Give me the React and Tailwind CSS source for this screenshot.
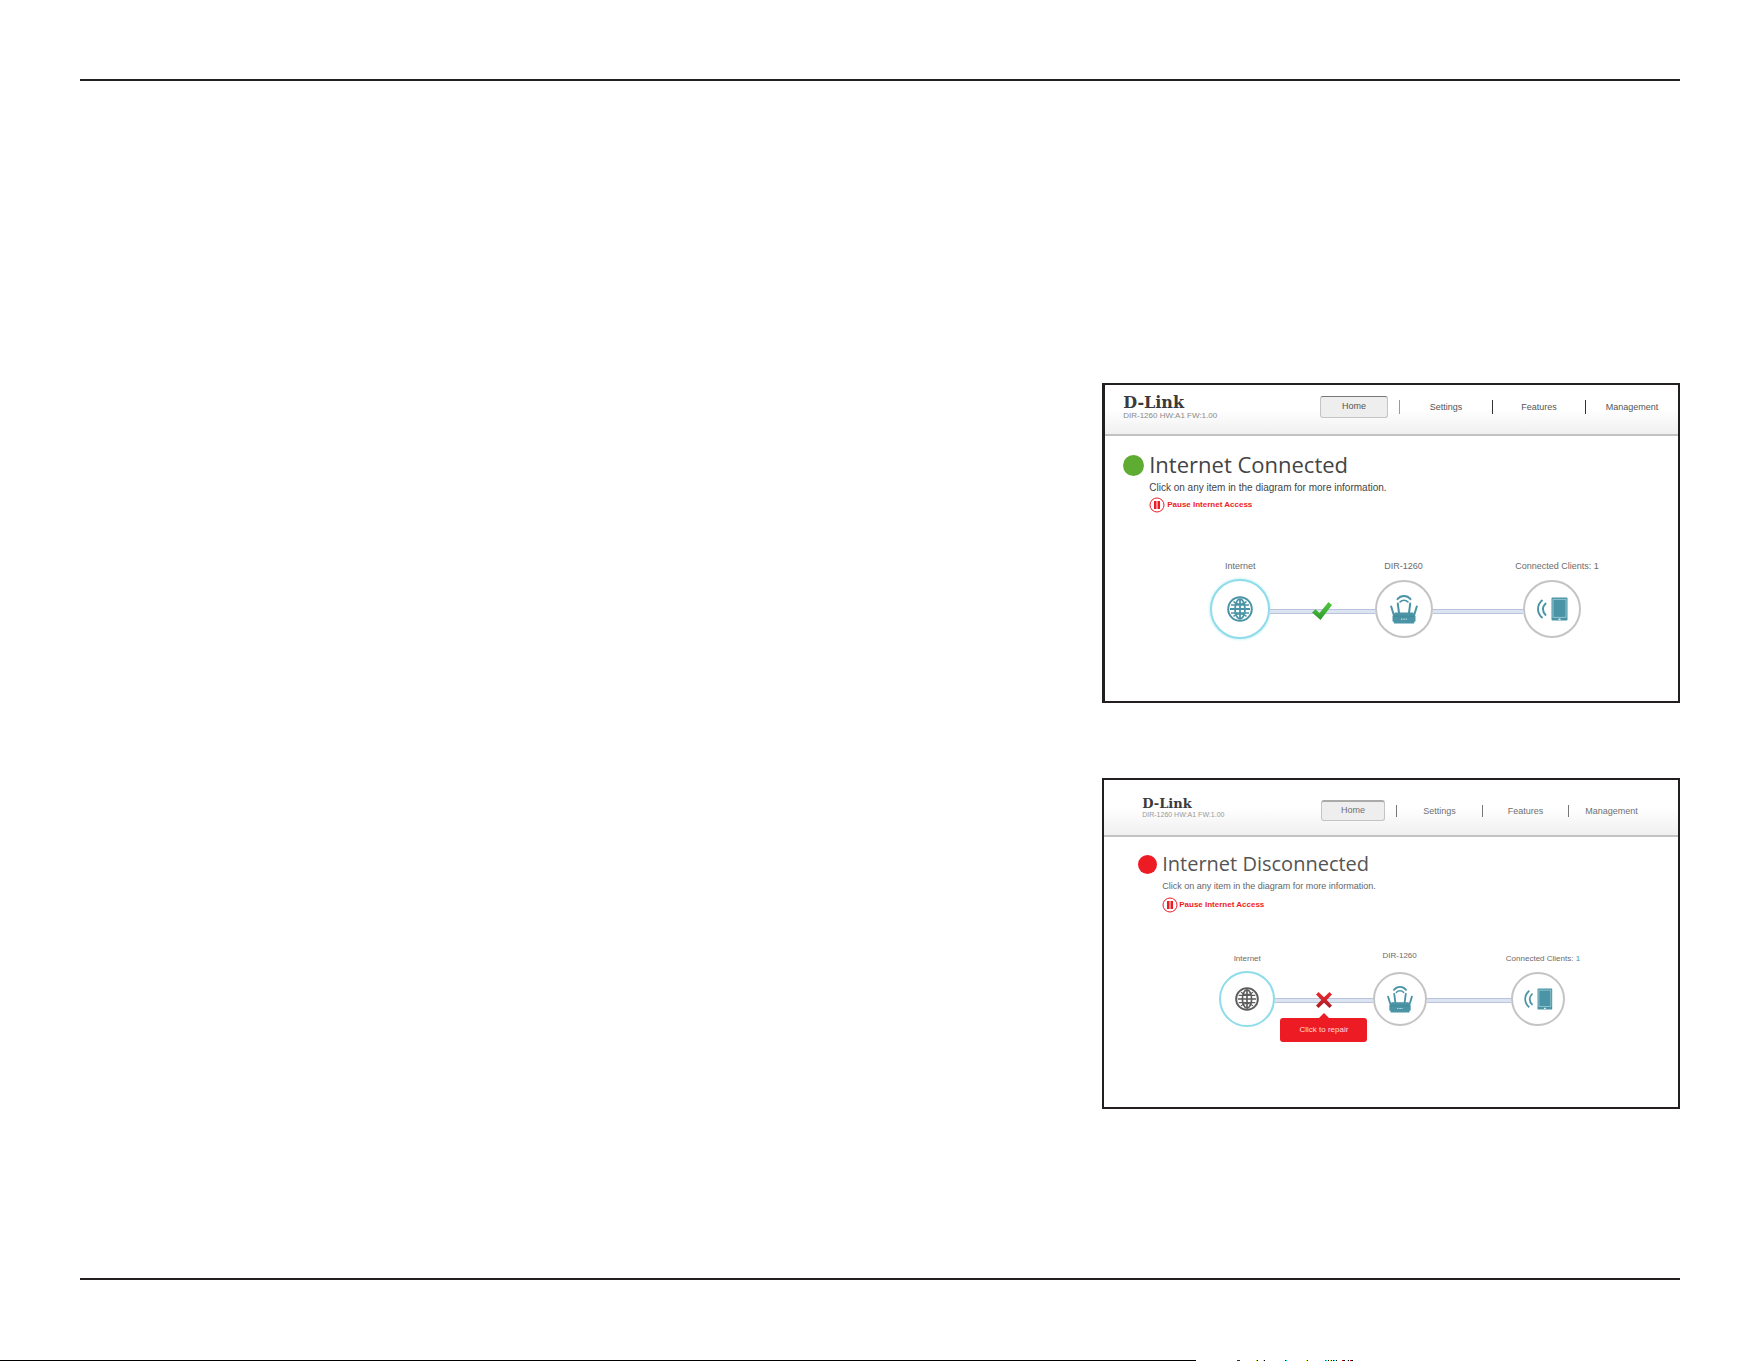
const noiseMarks = [
  [41, 3, "#234"],
  [60, 1, "#cc0"],
  [61, 1, "#000"],
  [67, 1, "#ee0"],
  [68, 1, "#000"],
  [89, 1, "#024"],
  [90, 1, "#0ee"],
  [110, 1, "#ee0"],
  [111, 1, "#00c"],
  [129, 1, "#e02"],
  [130, 1, "#0ee"],
  [132, 1, "#000"],
  [134, 1, "#ee0"],
  [135, 1, "#00c"],
  [137, 1, "#000"],
  [138, 1, "#0ee"],
  [140, 1, "#000"],
  [146, 1, "#e02"],
  [147, 2, "#000"],
  [151, 1, "#ee0"],
  [152, 1, "#000"],
  [154, 1, "#e02"],
  [155, 2, "#000"],
];

function GlobeIcon({ className, color }) {
  return (
    <svg viewBox="0 0 26 26" className={className} fill="none" stroke={color} strokeWidth="1.8">
      <circle cx="13" cy="13" r="11.8" strokeWidth="2" />
      <ellipse cx="13" cy="13" rx="5" ry="9.800" />
      <path d="M13 3v20M3 13h20" />
      <path d="M6.500 5.500C9.500 9 16.500 9 19.500 5.500M6.500 20.500C9.500 17 16.500 17 19.500 20.500M4 9h18M4 17h18" strokeWidth="1.300" />
    </svg>
  );
}

function RouterIcon({ className }) {
  return (
    <svg viewBox="0 0 28 30" className={className} fill="none" stroke="#4a94a6" strokeLinecap="round">
      <path d="M7.500 5.200C11 1 17 1 20.500 5.200" strokeWidth="1.900" />
      <path d="M10 8C12 5.600 16 5.600 18 8" strokeWidth="1.600" />
      <path d="M7.800 9.500L9 19M20.200 9.500L19 19M1.200 12.500L3.800 21M26.800 12.500L24.200 21" strokeWidth="2" />
      <path d="M5 18.500h18l2.500 3.500v5.500H24.500l-.5 2h-20l-.5-2H2.500V22z" fill="#4a94a6" stroke="none" />
      <path d="M4 22.300h20" stroke="#3b8294" strokeWidth=".6" />
      <path d="M11 25.200h6" stroke="#d5edf2" strokeWidth="1" strokeDasharray="1 .6" strokeLinecap="butt" />
    </svg>
  );
}

function TabletIcon({ className }) {
  return (
    <svg viewBox="0 0 32 24" className={className} fill="none" stroke="#4a94a6">
      <path d="M6.500 3C.5 8 .5 16 6.500 21" strokeWidth="1.900" />
      <path d="M10 6C6 10 6 14.500 10 18.500" strokeWidth="1.900" />
      <rect x="15.500" y=".5" width="16" height="23" rx="1" fill="#4a94a6" stroke="none" />
      <rect x="17" y="2.300" width="13" height="18" stroke="#a5d0da" strokeWidth=".8" />
      <path d="M22.500 22.200h2" stroke="#fff" strokeWidth="1.200" />
    </svg>
  );
}

function PauseIcon() {
  return (
    <svg viewBox="0 0 16 16" className="size-4" fill="#ed1c24">
      <circle cx="8" cy="8" r="7" fill="none" stroke="#ed1c24" strokeWidth="1" />
      <rect x="5" y="4" width="2.500" height="8" />
      <rect x="8.500" y="4" width="2.500" height="8" />
    </svg>
  );
}

function CheckIcon() {
  return (
    <svg viewBox="0 0 20 18" className="relative h-[18px] w-5">
      <defs>
        <linearGradient id="check" x1="0" y1="0" x2="0" y2="1">
          <stop offset="0" stopColor="#52c83c" />
          <stop offset="1" stopColor="#2f9a30" />
        </linearGradient>
      </defs>
      <path d="M0 10.500L3.500 7.200L7.500 11L16.500 0L20 3L8.500 18z" fill="url(#check)" />
    </svg>
  );
}

function CrossIcon() {
  return (
    <svg viewBox="0 0 18 18" className="relative size-[18px]">
      <defs>
        <linearGradient id="cross" x1="0" y1="0" x2="0" y2="1">
          <stop offset="0" stopColor="#ef2a2f" />
          <stop offset="1" stopColor="#a81e25" />
        </linearGradient>
      </defs>
      <path
        d="M1 3.500L3.500 1L9 6.300L14.500 1L17 3.500L11.700 9L17 14.500L14.500 17L9 11.700L3.500 17L1 14.500L6.300 9z"
        fill="url(#cross)"
      />
    </svg>
  );
}

function Link({ className, children }) {
  return (
    <div className={`relative flex items-center justify-center ${className}`}>
      <div className="absolute inset-x-0 h-[5px] border-y border-[#b9c3dc] bg-[#dde4f1]" />
      {children}
    </div>
  );
}

function Node({ label, className, labelClass = "", circleClass, children }) {
  return (
    <button type="button" className={`flex shrink-0 flex-col items-center ${className}`}>
      <span className={`whitespace-nowrap leading-3 text-[#6b6b6b] ${labelClass}`}>{label}</span>
      <span className={`flex w-full items-center justify-center rounded-full border-2 bg-white ${circleClass}`}>
        {children}
      </span>
    </button>
  );
}

function ConnectedPanel() {
  return (
    <section className="border-2 border-l-3 border-[#231f20] bg-white pb-[59px]">
      <header className="flex h-[51px] items-start justify-between border-b-2 border-[#c2c2c2] bg-linear-to-b from-white from-50% to-[#f0f0f0]">
        <div className="pl-[18px] pt-[10px]">
          <div className="font-['DejaVu_Serif',serif] text-[16px] font-bold leading-4 text-[#3a3a3a]">D-Link</div>
          <div className="text-[8px] leading-[10px] text-[#8a8a86]">DIR-1260 HW:A1 FW:1.00</div>
        </div>
        <nav className="flex items-center pt-[11px] text-[9px] text-[#555]">
          <a href="#home" className="mr-[11px] flex h-[22px] w-[68px] items-center justify-center rounded-[3px] border border-[#c4c4c4] border-t-[#777] bg-[#eee]">
            Home
          </a>
          <a href="#settings" className="w-[93px] border-l border-[#999] text-center leading-[14px]">Settings</a>
          <a href="#features" className="w-[93px] border-l border-[#333] text-center leading-[14px]">Features</a>
          <a href="#management" className="w-[93px] border-l border-[#333] text-center leading-[14px]">Management</a>
        </nav>
      </header>

      <div className="flex gap-[5px] pl-[18px] pt-4">
        <span className="mt-[3px] size-[21px] rounded-full bg-[#5fac33]" />
        <div>
          <h1 className="font-['Open_Sans',sans-serif] text-[22px] leading-6 text-[#444]">Internet Connected</h1>
          <p className="pt-[6px] text-[10px] leading-3 text-[#444]">Click on any item in the diagram for more information.</p>
          <button type="button" className="mt-[3px] flex h-4 items-center gap-[2px] text-[8px] font-bold text-[#ed1c24]">
            <PauseIcon />
            Pause Internet Access
          </button>
        </div>
      </div>

      <div className="flex items-start pl-[105px] pr-[97px] pt-[47px] text-[9px]">
        <Node label="Internet" className="w-[60px]" circleClass="mt-[7px] h-[60px] border-[#8fdcea] shadow-[0_0_3px_#a5e5f0]">
          <GlobeIcon className="size-[26px]" color="#4a94a6" />
        </Node>
        <Link className="mt-5 h-[62px] flex-[105]">
          <CheckIcon />
        </Link>
        <Node label="DIR-1260" className="w-[58px]" circleClass="mt-2 h-[58px] border-[#c4c4c4]">
          <RouterIcon className="h-[30px] w-7" />
        </Node>
        <Link className="mt-5 h-[62px] flex-[91]" />
        <Node label="Connected Clients: 1" className="w-[58px]" labelClass="pl-[10px]" circleClass="mt-2 h-[58px] border-[#c4c4c4]">
          <TabletIcon className="h-6 w-8" />
        </Node>
      </div>
    </section>
  );
}

function DisconnectedPanel() {
  return (
    <section className="border-2 border-[#231f20] bg-white pb-[79px]">
      <header className="flex h-[57px] items-start justify-between border-b-2 border-[#c2c2c2] bg-linear-to-b from-white from-50% to-[#f0f0f0]">
        <div className="pl-[38px] pt-[17px]">
          <div className="font-['DejaVu_Serif',serif] text-[13px] font-bold leading-[13px] text-[#3a3a3a]">D-Link</div>
          <div className="text-[7px] leading-[10px] text-[#999]">DIR-1260 HW:A1 FW:1.00</div>
        </div>
        <nav className="flex items-center pr-6 pt-5 text-[9px] text-[#707070]">
          <a href="#home" className="mr-[11px] flex h-[21px] w-16 items-center justify-center rounded-[3px] border border-t-2 border-[#c4c4c4] border-t-[#aaa] bg-[#eee]">
            Home
          </a>
          <a href="#settings" className="w-[86px] border-l border-[#777] text-center leading-3">Settings</a>
          <a href="#features" className="w-[86px] border-l border-[#777] text-center leading-3">Features</a>
          <a href="#management" className="w-[86px] border-l border-[#777] text-center leading-3">Management</a>
        </nav>
      </header>

      <div className="flex gap-[5px] pl-[34px] pt-[15px]">
        <span className="mt-[3px] size-[19px] rounded-full bg-[#ed1c24]" />
        <div>
          <h1 className="font-['Open_Sans',sans-serif] text-[20px] leading-6 text-[#555]">Internet Disconnected</h1>
          <p className="pt-1 text-[9px] leading-3 text-[#666]">Click on any item in the diagram for more information.</p>
          <button type="button" className="mt-[5px] flex h-4 items-center gap-px text-[8px] font-bold text-[#ed1c24]">
            <PauseIcon />
            Pause Internet Access
          </button>
        </div>
      </div>

      <div className="flex items-start pl-[115px] pr-[113px] pt-[37px] text-[8px]">
        <Node label="Internet" className="w-[56px] pt-[3px]" circleClass="mt-[6px] h-[56px] border-[#8fdcea]">
          <GlobeIcon className="size-6" color="#5c5c5c" />
        </Node>
        <Link className="mt-[22px] h-[56px] flex-[97]">
          <CrossIcon />
          <button type="button" className="absolute top-[46px] h-6 w-[87px] rounded-[3px] bg-[#ed1c24] text-[8px] text-[#ffd9d9]">
            <svg viewBox="0 0 12 6" className="absolute -top-[5px] left-1/2 h-[6px] w-3 -translate-x-1/2">
              <path d="M6 0L12 6H0z" fill="#ed1c24" />
            </svg>
            Click to repair
          </button>
        </Link>
        <Node label="DIR-1260" className="w-[54px]" circleClass="mt-[10px] h-[54px] border-[#c4c4c4]">
          <RouterIcon className="h-7 w-[26px]" />
        </Node>
        <Link className="mt-[22px] h-[56px] flex-[84]" />
        <Node
          label={<>Connected Clients: <span className="text-[#4a94a6]">1</span></>}
          className="w-[54px] pt-[3px]"
          labelClass="pl-[10px]"
          circleClass="mt-[7px] h-[54px] border-[#c4c4c4]"
        >
          <TabletIcon className="h-[22px] w-[30px]" />
        </Node>
      </div>
    </section>
  );
}

export default function App() {
  return (
    <div className="flex min-h-screen flex-col bg-white font-['Liberation_Sans',Arial,sans-serif]">
      <main className="ml-20 mr-[81px] mt-[79px] border-y-2 border-[#231f20] pb-[169px] pt-[302px]">
        <div className="grid grid-cols-[23fr_13fr]">
          <div className="col-start-2 flex flex-col gap-[75px]">
            <ConnectedPanel />
            <DisconnectedPanel />
          </div>
        </div>
      </main>
      <footer className="mt-auto flex h-px">
        <div className="w-[67.9%] bg-black" />
        <svg className="h-px flex-1">
          {noiseMarks.map(([x, w, fill]) => (
            <rect key={x} x={x} y="0" width={w} height="1" fill={fill} />
          ))}
        </svg>
      </footer>
    </div>
  );
}
